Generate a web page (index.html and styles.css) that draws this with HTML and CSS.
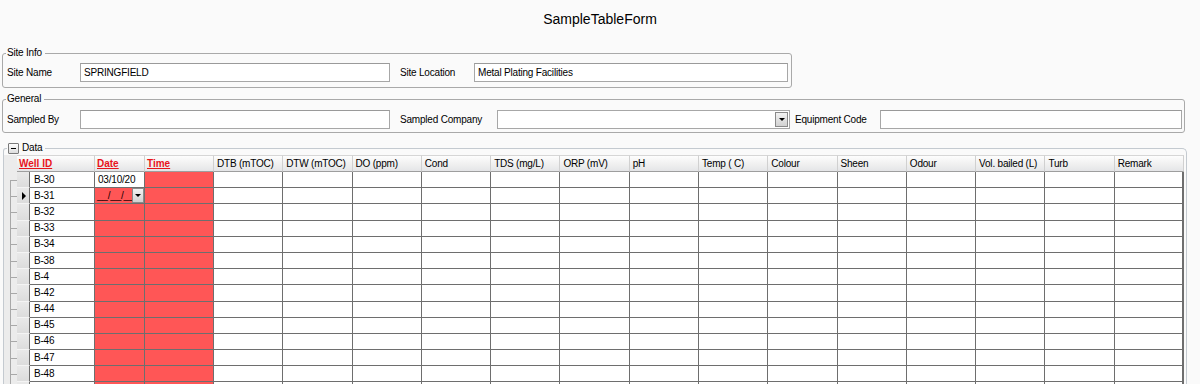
FILE: index.html
```html
<!DOCTYPE html>
<html lang="en">
  <head>
    <meta charset="UTF-8" />
    <title>SampleTableForm</title>
    <link rel="stylesheet" href="styles.css">
  </head>
  <body>
    <h1 class="title">SampleTableForm</h1>

    <!-- Site Info -->
    <fieldset class="group site-info">
      <legend>Site Info</legend>
      <div class="field-row">
        <label class="lbl lbl-short">Site Name</label>
        <input class="box box-left" value="SPRINGFIELD">
        <label class="lbl lbl-loc">Site Location</label>
        <input class="box box-loc" value="Metal Plating Facilities">
      </div>
    </fieldset>

    <!-- General -->
    <fieldset class="group general">
      <legend>General</legend>
      <div class="field-row">
        <label class="lbl lbl-short">Sampled By</label>
        <input class="box box-left" value="">
        <label class="lbl lbl-company">Sampled Company</label>
        <div class="combo">
          <span class="drop-btn"><span class="arrow"></span></span>
        </div>
        <label class="lbl lbl-equip">Equipment Code</label>
        <input class="box box-equip" value="">
      </div>
    </fieldset>

    <!-- Data grid -->
    <fieldset class="group data">
      <legend><span class="collapse"></span>Data</legend>
      <table class="grid">
        <colgroup>
          <col class="c-tree"><col class="c-sel"><col class="c-id"><col class="c-date"><col class="c-time">
          <col span="14">
        </colgroup>
        <thead>
          <tr>
            <th class="tree"></th>
            <th colspan="2" class="req">Well ID</th>
            <th class="req">Date</th>
            <th class="req">Time</th>
            <th>DTB (mTOC)</th>
            <th>DTW (mTOC)</th>
            <th>DO (ppm)</th>
            <th>Cond</th>
            <th>TDS (mg/L)</th>
            <th>ORP (mV)</th>
            <th>pH</th>
            <th>Temp ( C)</th>
            <th>Colour</th>
            <th>Sheen</th>
            <th>Odour</th>
            <th>Vol. bailed (L)</th>
            <th>Turb</th>
            <th>Remark</th>
          </tr>
        </thead>
        <tbody>
          <tr class="first">
            <td class="tree"></td><td class="sel"></td><td>B-30</td><td class="date-ok">03/10/20</td><td class="red"></td>
            <td></td><td></td><td></td><td></td><td></td><td></td><td></td><td></td><td></td><td></td><td></td><td></td><td></td><td></td>
          </tr>
          <tr>
            <td class="tree"></td>
            <td class="sel"><svg width="5" height="8" viewBox="0 0 5 8"><path d="M0 0L4 4L0 8Z" fill="#000"/></svg></td>
            <td>B-31</td>
            <td class="red editing"><span class="mask">__/__/__</span><span class="drop-btn small"><span class="arrow"></span></span></td>
            <td class="red"></td>
            <td></td><td></td><td></td><td></td><td></td><td></td><td></td><td></td><td></td><td></td><td></td><td></td><td></td><td></td>
          </tr>
          <tr>
            <td class="tree"></td><td class="sel"></td><td>B-32</td><td class="red"></td><td class="red"></td>
            <td></td><td></td><td></td><td></td><td></td><td></td><td></td><td></td><td></td><td></td><td></td><td></td><td></td><td></td>
          </tr>
          <tr>
            <td class="tree"></td><td class="sel"></td><td>B-33</td><td class="red"></td><td class="red"></td>
            <td></td><td></td><td></td><td></td><td></td><td></td><td></td><td></td><td></td><td></td><td></td><td></td><td></td><td></td>
          </tr>
          <tr>
            <td class="tree"></td><td class="sel"></td><td>B-34</td><td class="red"></td><td class="red"></td>
            <td></td><td></td><td></td><td></td><td></td><td></td><td></td><td></td><td></td><td></td><td></td><td></td><td></td><td></td>
          </tr>
          <tr>
            <td class="tree"></td><td class="sel"></td><td>B-38</td><td class="red"></td><td class="red"></td>
            <td></td><td></td><td></td><td></td><td></td><td></td><td></td><td></td><td></td><td></td><td></td><td></td><td></td><td></td>
          </tr>
          <tr>
            <td class="tree"></td><td class="sel"></td><td>B-4</td><td class="red"></td><td class="red"></td>
            <td></td><td></td><td></td><td></td><td></td><td></td><td></td><td></td><td></td><td></td><td></td><td></td><td></td><td></td>
          </tr>
          <tr>
            <td class="tree"></td><td class="sel"></td><td>B-42</td><td class="red"></td><td class="red"></td>
            <td></td><td></td><td></td><td></td><td></td><td></td><td></td><td></td><td></td><td></td><td></td><td></td><td></td><td></td>
          </tr>
          <tr>
            <td class="tree"></td><td class="sel"></td><td>B-44</td><td class="red"></td><td class="red"></td>
            <td></td><td></td><td></td><td></td><td></td><td></td><td></td><td></td><td></td><td></td><td></td><td></td><td></td><td></td>
          </tr>
          <tr>
            <td class="tree"></td><td class="sel"></td><td>B-45</td><td class="red"></td><td class="red"></td>
            <td></td><td></td><td></td><td></td><td></td><td></td><td></td><td></td><td></td><td></td><td></td><td></td><td></td><td></td>
          </tr>
          <tr>
            <td class="tree"></td><td class="sel"></td><td>B-46</td><td class="red"></td><td class="red"></td>
            <td></td><td></td><td></td><td></td><td></td><td></td><td></td><td></td><td></td><td></td><td></td><td></td><td></td><td></td>
          </tr>
          <tr>
            <td class="tree"></td><td class="sel"></td><td>B-47</td><td class="red"></td><td class="red"></td>
            <td></td><td></td><td></td><td></td><td></td><td></td><td></td><td></td><td></td><td></td><td></td><td></td><td></td><td></td>
          </tr>
          <tr>
            <td class="tree"></td><td class="sel"></td><td>B-48</td><td class="red"></td><td class="red"></td>
            <td></td><td></td><td></td><td></td><td></td><td></td><td></td><td></td><td></td><td></td><td></td><td></td><td></td><td></td>
          </tr>
          <tr>
            <td class="tree"></td><td class="sel"></td><td></td><td class="red"></td><td class="red"></td>
            <td></td><td></td><td></td><td></td><td></td><td></td><td></td><td></td><td></td><td></td><td></td><td></td><td></td><td></td>
          </tr>
        </tbody>
      </table>
    </fieldset>
  </body>
</html>
```

FILE: styles.css
```css
/* base */
body {
  margin: 0;
  padding: 0;
  background: #fafafa;
  font-family: "Liberation Sans", Arial, sans-serif;
  font-size: 10px;
  letter-spacing: -0.2px;
  color: #000;
  overflow: hidden;
}

.title {
  margin: 0;
  height: 38px;
  line-height: 38px;
  text-align: center;
  font-size: 14px;
  font-weight: normal;
  letter-spacing: 0;
}

/* ===== group boxes ===== */
.group {
  box-sizing: border-box;
  margin: 0;
  min-width: 0;
  border: 1px solid #a9a9a9;
  border-radius: 3px;
}

.group legend {
  padding: 0 3px 0 1px;
  line-height: 12px;
  height: 12px;
}

.site-info {
  margin: 9px 0 0 2px;
  width: 790px;
  padding: 4px 3px 5px 3px;
}

.general {
  margin: 5px 0 0 2px;
  width: 1183px;
  padding: 5px 2px 3px 3px;
}

.data {
  margin: 9px 0 0 3px;
  width: 1184px;
  padding: 1px 1px 0 0;
  border-color: #c4cad0;
  border-bottom: none;
  border-radius: 3px 5px 0 0;
}

.data legend {
  margin-left: 3px;
  display: flex;
  align-items: center;
}

.field-row {
  display: flex;
  align-items: center;
  padding-left: 1px;
}

.lbl {
  flex: none;
}

.lbl-short {
  width: 73px;
}

.lbl-loc {
  width: 74px;
  margin-left: 10px;
}

.lbl-company {
  width: 97px;
  margin-left: 10px;
}

.lbl-equip {
  width: 85px;
  margin-left: 5px;
}

.box {
  box-sizing: border-box;
  height: 19px;
  margin: 0;
  padding: 0 3px;
  border: 1px solid #a7a7a7;
  border-top-color: #9a9a9a;
  background: #fff;
  font: inherit;
  letter-spacing: inherit;
  color: #000;
  outline: none;
}

.box-left {
  width: 310px;
}

.box-loc {
  width: 314px;
}

.box-equip {
  width: 302px;
}

.combo {
  box-sizing: border-box;
  width: 293px;
  height: 19px;
  border: 1px solid #a7a7a7;
  background: #fff;
  display: flex;
  justify-content: flex-end;
  align-items: center;
  padding-right: 1px;
}

.drop-btn {
  box-sizing: border-box;
  width: 13px;
  height: 15px;
  border: 1px solid #8a8a8a;
  background: linear-gradient(#f2f2f2, #d2d2d2);
  display: flex;
  justify-content: center;
  align-items: center;
}

.arrow {
  width: 0;
  height: 0;
  border-left: 3px solid transparent;
  border-right: 3px solid transparent;
  border-top: 3px solid #000;
}

.collapse {
  box-sizing: border-box;
  width: 11px;
  height: 11px;
  margin-right: 3px;
  border: 1px solid #7a7a7a;
  border-radius: 1px;
  background: linear-gradient(#000, #000) center / 5px 1px no-repeat,
    linear-gradient(#fdfdfd, #dedede);
}

/* ===== grid ===== */
.grid {
  table-layout: fixed;
  width: 1180px;
  border-collapse: separate;
  border-spacing: 0;
}

.c-tree { width: 13px; }
.c-sel { width: 13px; }
.c-id { width: 65px; }
.c-date { width: 50px; }
.c-time { width: 69px; }

.grid thead tr {
  height: 17px;
}

.grid th {
  padding: 0 0 0 3px;
  text-align: left;
  font-weight: normal;
  line-height: 13px;
  white-space: nowrap;
  overflow: hidden;
  border-top: 1px solid #d6d6d6;
  border-right: 1px solid #d0d0d0;
  border-bottom: 1px solid #9e9e9e;
  background: linear-gradient(#fdfdfd, #f0f0f0 55%, #e4e5e7);
}

.grid th.tree {
  border: none;
  background: #ececec;
}

.grid th.req {
  color: #e8141b;
  font-weight: bold;
  text-decoration: underline;
  padding-left: 2px;
  letter-spacing: 0;
}

.grid tbody tr {
  height: 16.2px;
}

.grid td {
  padding: 0 0 0 4px;
  line-height: 14px;
  white-space: nowrap;
  overflow: hidden;
  background: #fff;
  border-right: 1px solid #6e6e6e;
  border-bottom: 1px solid #6e6e6e;
}

.grid td:last-child {
  border-right-width: 2px;
}

.grid td.tree {
  padding: 0;
  border: none;
  background: linear-gradient(#a8a8a8, #a8a8a8) 6px 0 / 1px 100% no-repeat,
    linear-gradient(#a8a8a8, #a8a8a8) 6px 50% / 7px 1px no-repeat,
    #ececec;
}

.grid tr.first td.tree {
  background: linear-gradient(#a8a8a8, #a8a8a8) 6px 100% / 1px 50% no-repeat,
    linear-gradient(#a8a8a8, #a8a8a8) 6px 50% / 7px 1px no-repeat,
    #ececec;
}

.grid td.sel {
  padding: 0 0 0 5px;
  background: linear-gradient(#e9e9e9, #dcdcdc);
  border-bottom-color: #f4f4f4;
  line-height: 0;
}

.grid td.red {
  background: #ff5656;
}

.grid td.date-ok {
  padding-left: 3px;
}

.grid td.editing {
  padding: 0 0 0 2px;
}

.grid td.editing > * {
  vertical-align: middle;
}

.mask {
  display: inline-block;
  width: 35px;
  color: #1a0000;
}

.drop-btn.small {
  display: inline-flex;
  width: 12px;
  height: 15px;
}
```
